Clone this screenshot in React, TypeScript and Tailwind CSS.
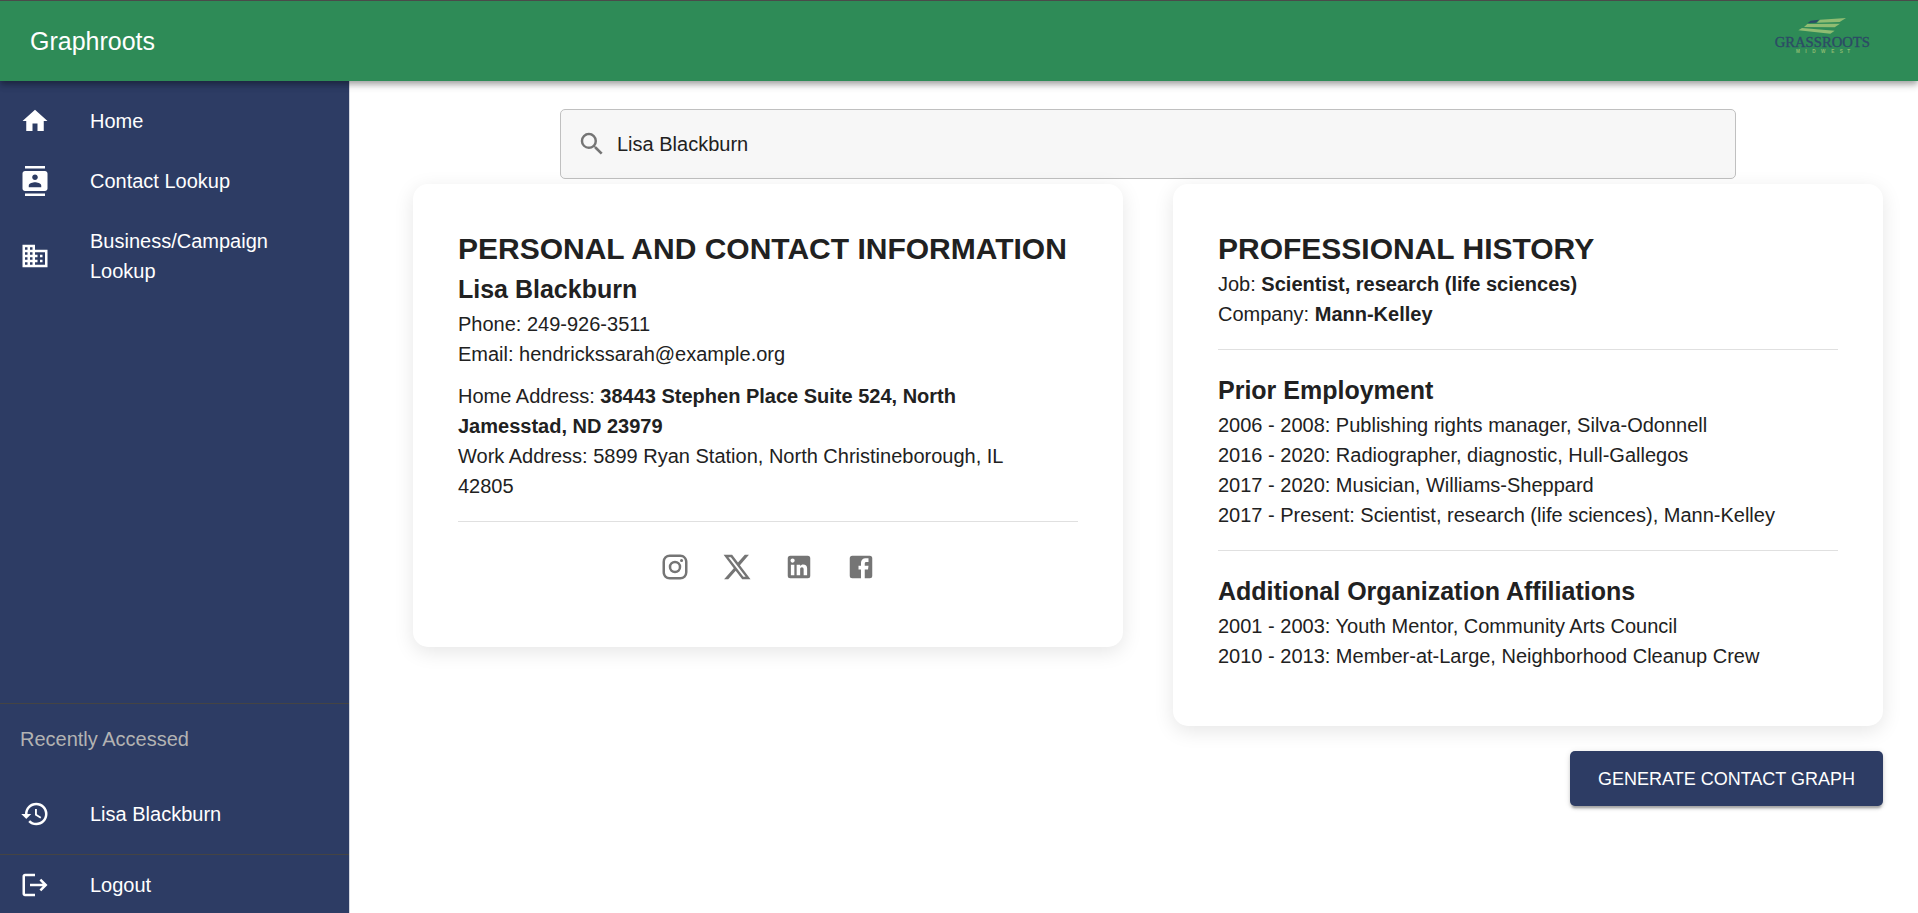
import { useState, type ReactNode } from "react";
import {
  MdHome,
  MdContacts,
  MdBusiness,
  MdHistory,
  MdLogout,
  MdSearch,
} from "react-icons/md";

function Logo() {
  return (
    <svg viewBox="0 0 330 150" className="h-[50px] w-[110px]" role="img" aria-label="Grassroots Midwest">
      <g fill="#8fbc72">
        <path d="M150 29 228 24 209 36 141 38z" />
        <path d="M112 42 210 41 194 52 102 51z" />
        <path d="M96 54 194 62 181 71 85 61z" />
      </g>
      <path d="M122 32 147 29 138 38 113 39z" fill="#2c4a66" />
      <text
        x="157"
        y="110"
        textAnchor="middle"
        fontSize="44"
        fill="#2c4a66"
        stroke="#2c4a66"
        strokeWidth="1"
        fontFamily="Liberation Serif, serif"
      >
        GRASSROOTS
      </text>
      <text
        x="78 106 127 153 184 209 232"
        y="129"
        fontSize="14"
        fill="#8fbc72"
        fontWeight="700"
        fontFamily="Liberation Sans, sans-serif"
      >
        MIDWEST
      </text>
    </svg>
  );
}

function NavItem({ icon, children }: { icon: ReactNode; children: ReactNode }) {
  return (
    <a href="#" className="flex items-center py-[15px] pr-5 pl-5 text-white">
      <span className="w-[70px] shrink-0 text-[30px]">{icon}</span>
      <span>{children}</span>
    </a>
  );
}

function Card({ title, children }: { title: string; children: ReactNode }) {
  return (
    <section className="rounded-[15px] bg-white px-[45px] pt-[45px] pb-[55px] shadow-[0_5px_20px_rgba(0,0,0,0.1)]">
      <h2 className="text-[30px] leading-10 font-bold">{title}</h2>
      {children}
    </section>
  );
}

function Divider() {
  return <hr className="my-5 border-0 border-t border-[#e0e0e0]" />;
}

const jobs = [
  "2006 - 2008: Publishing rights manager, Silva-Odonnell",
  "2016 - 2020: Radiographer, diagnostic, Hull-Gallegos",
  "2017 - 2020: Musician, Williams-Sheppard",
  "2017 - Present: Scientist, research (life sciences), Mann-Kelley",
];

const affiliations = [
  "2001 - 2003: Youth Mentor, Community Arts Council",
  "2010 - 2013: Member-at-Large, Neighborhood Cleanup Crew",
];

const socials = [
  {
    label: "Instagram",
    path: "M7.8 2h8.4C19.4 2 22 4.6 22 7.8v8.4a5.8 5.8 0 0 1-5.8 5.8H7.8C4.6 22 2 19.4 2 16.2V7.8A5.8 5.8 0 0 1 7.8 2m-.2 2A3.6 3.6 0 0 0 4 7.6v8.8C4 18.39 5.61 20 7.6 20h8.8a3.6 3.6 0 0 0 3.6-3.6V7.6C20 5.61 18.39 4 16.4 4H7.6m9.65 1.5a1.25 1.25 0 0 1 1.25 1.25A1.25 1.25 0 0 1 17.25 8 1.25 1.25 0 0 1 16 6.75a1.25 1.25 0 0 1 1.25-1.25M12 7a5 5 0 0 1 5 5 5 5 0 0 1-5 5 5 5 0 0 1-5-5 5 5 0 0 1 5-5m0 2a3 3 0 0 0-3 3 3 3 0 0 0 3 3 3 3 0 0 0 3-3 3 3 0 0 0-3-3z",
  },
  {
    label: "X",
    path: "M18.244 2.25h3.308l-7.227 8.26 8.502 11.24H16.17l-5.214-6.817L4.99 21.75H1.68l7.73-8.835L1.254 2.25H8.08l4.713 6.231zm-1.161 17.52h1.833L7.084 4.126H5.117z",
  },
  {
    label: "LinkedIn",
    path: "M19 3a2 2 0 0 1 2 2v14a2 2 0 0 1-2 2H5a2 2 0 0 1-2-2V5a2 2 0 0 1 2-2h14m-.5 15.5v-5.3a3.26 3.26 0 0 0-3.26-3.26c-.85 0-1.84.52-2.32 1.3v-1.11h-2.79v8.37h2.79v-4.93c0-.77.62-1.4 1.39-1.4a1.4 1.4 0 0 1 1.4 1.4v4.93h2.79M6.88 8.56a1.68 1.68 0 0 0 1.68-1.68c0-.93-.75-1.69-1.68-1.69a1.69 1.69 0 0 0-1.69 1.69c0 .93.76 1.68 1.69 1.68m1.39 9.94v-8.37H5.5v8.37h2.77z",
  },
  {
    label: "Facebook",
    path: "M5 3h14a2 2 0 0 1 2 2v14a2 2 0 0 1-2 2h-4v-7h2.600l.400-3h-3V9.200c0-.7.4-1.200 1.200-1.200H18V5h-2.500A3.500 3.500 0 0 0 12 8.500V11h-2v3h2v7H5a2 2 0 0 1-2-2V5a2 2 0 0 1 2-2z",
  },
];

export default function App() {
  const [query, setQuery] = useState("Lisa Blackburn");

  return (
    <div className="flex min-h-screen flex-col bg-white font-['Liberation_Sans',Arial,sans-serif] text-[20px] leading-[30px] text-[#212121]">
      <header className="relative z-10 flex h-[81px] items-center justify-between border-t border-[#4a4a4a] bg-[#2e8b57] pr-[38px] pl-[30px] text-white shadow-[0_3px_5px_-1px_rgba(0,0,0,0.2),0_5px_6px_rgba(0,0,0,0.14),0_1px_12px_rgba(0,0,0,0.12)]">
        <h1 className="text-[25px] leading-10">Graphroots</h1>
        <div className="pb-3">
          <Logo />
        </div>
      </header>

      <div className="flex grow">
        <aside className="flex w-[350px] shrink-0 flex-col border-r border-[#d5d8e0] bg-[#2d3c64]">
          <nav className="grow pt-2.5">
            <NavItem icon={<MdHome />}>Home</NavItem>
            <NavItem icon={<MdContacts />}>Contact Lookup</NavItem>
            <NavItem icon={<MdBusiness />}>Business/Campaign Lookup</NavItem>
          </nav>
          <div className="border-t border-[#444444] pb-2.5">
            <h2 className="px-5 pt-5 pb-[30px] text-[#b3b3b3]">Recently Accessed</h2>
            <NavItem icon={<MdHistory />}>Lisa Blackburn</NavItem>
          </div>
          <div className="h-[59px] overflow-hidden border-t border-[#444444]">
            <NavItem icon={<MdLogout />}>Logout</NavItem>
          </div>
        </aside>

        <main className="grow pt-7 pr-[35px] pl-[63px]">
          <label className="mx-auto flex h-[70px] w-4/5 items-center rounded-[5px] border border-[#c0c0c0] bg-[#f7f7f7] px-4">
            <MdSearch className="mr-2.5 size-[30px] shrink-0 text-[#757575]" />
            <input
              type="text"
              aria-label="Search contacts"
              className="min-w-0 grow bg-transparent outline-none"
              value={query}
              onChange={(e) => setQuery(e.target.value)}
            />
          </label>

          <div className="mt-[5px] grid grid-cols-2 items-start gap-[50px]">
            <Card title="PERSONAL AND CONTACT INFORMATION">
              <h3 className="text-[25px] leading-10 font-bold">Lisa Blackburn</h3>
              <p>Phone: 249-926-3511</p>
              <p>Email: hendrickssarah@example.org</p>
              <div className="mt-3 pr-5">
                <p>
                  Home Address: <strong>38443 Stephen Place Suite 524, North Jamesstad, ND 23979</strong>
                </p>
                <p>Work Address: 5899 Ryan Station, North Christineborough, IL 42805</p>
              </div>
              <Divider />
              <div className="flex justify-center gap-3">
                {socials.map((s) => (
                  <button
                    key={s.label}
                    type="button"
                    aria-label={s.label}
                    className="flex size-[50px] items-center justify-center text-[#757575]"
                  >
                    <svg viewBox="0 0 24 24" fill="currentColor" className="size-[30px]" aria-hidden="true">
                      <path d={s.path} />
                    </svg>
                  </button>
                ))}
              </div>
            </Card>

            <Card title="PROFESSIONAL HISTORY">
              <p>
                Job: <strong>Scientist, research (life sciences)</strong>
              </p>
              <p>
                Company: <strong>Mann-Kelley</strong>
              </p>
              <Divider />
              <h3 className="text-[25px] leading-10 font-bold">Prior Employment</h3>
              {jobs.map((j) => (
                <p key={j}>{j}</p>
              ))}
              <Divider />
              <h3 className="text-[25px] leading-10 font-bold">Additional Organization Affiliations</h3>
              {affiliations.map((a) => (
                <p key={a}>{a}</p>
              ))}
            </Card>
          </div>

          <div className="mt-[25px] flex justify-end">
            <button
              type="button"
              className="h-[55px] rounded-[5px] bg-[#2d3c64] px-7 text-[18px] text-white shadow-[0_4px_2px_-2px_rgba(0,0,0,0.2),0_3px_3px_rgba(0,0,0,0.14),0_1px_6px_rgba(0,0,0,0.12)]"
            >
              GENERATE CONTACT GRAPH
            </button>
          </div>
        </main>
      </div>
    </div>
  );
}
